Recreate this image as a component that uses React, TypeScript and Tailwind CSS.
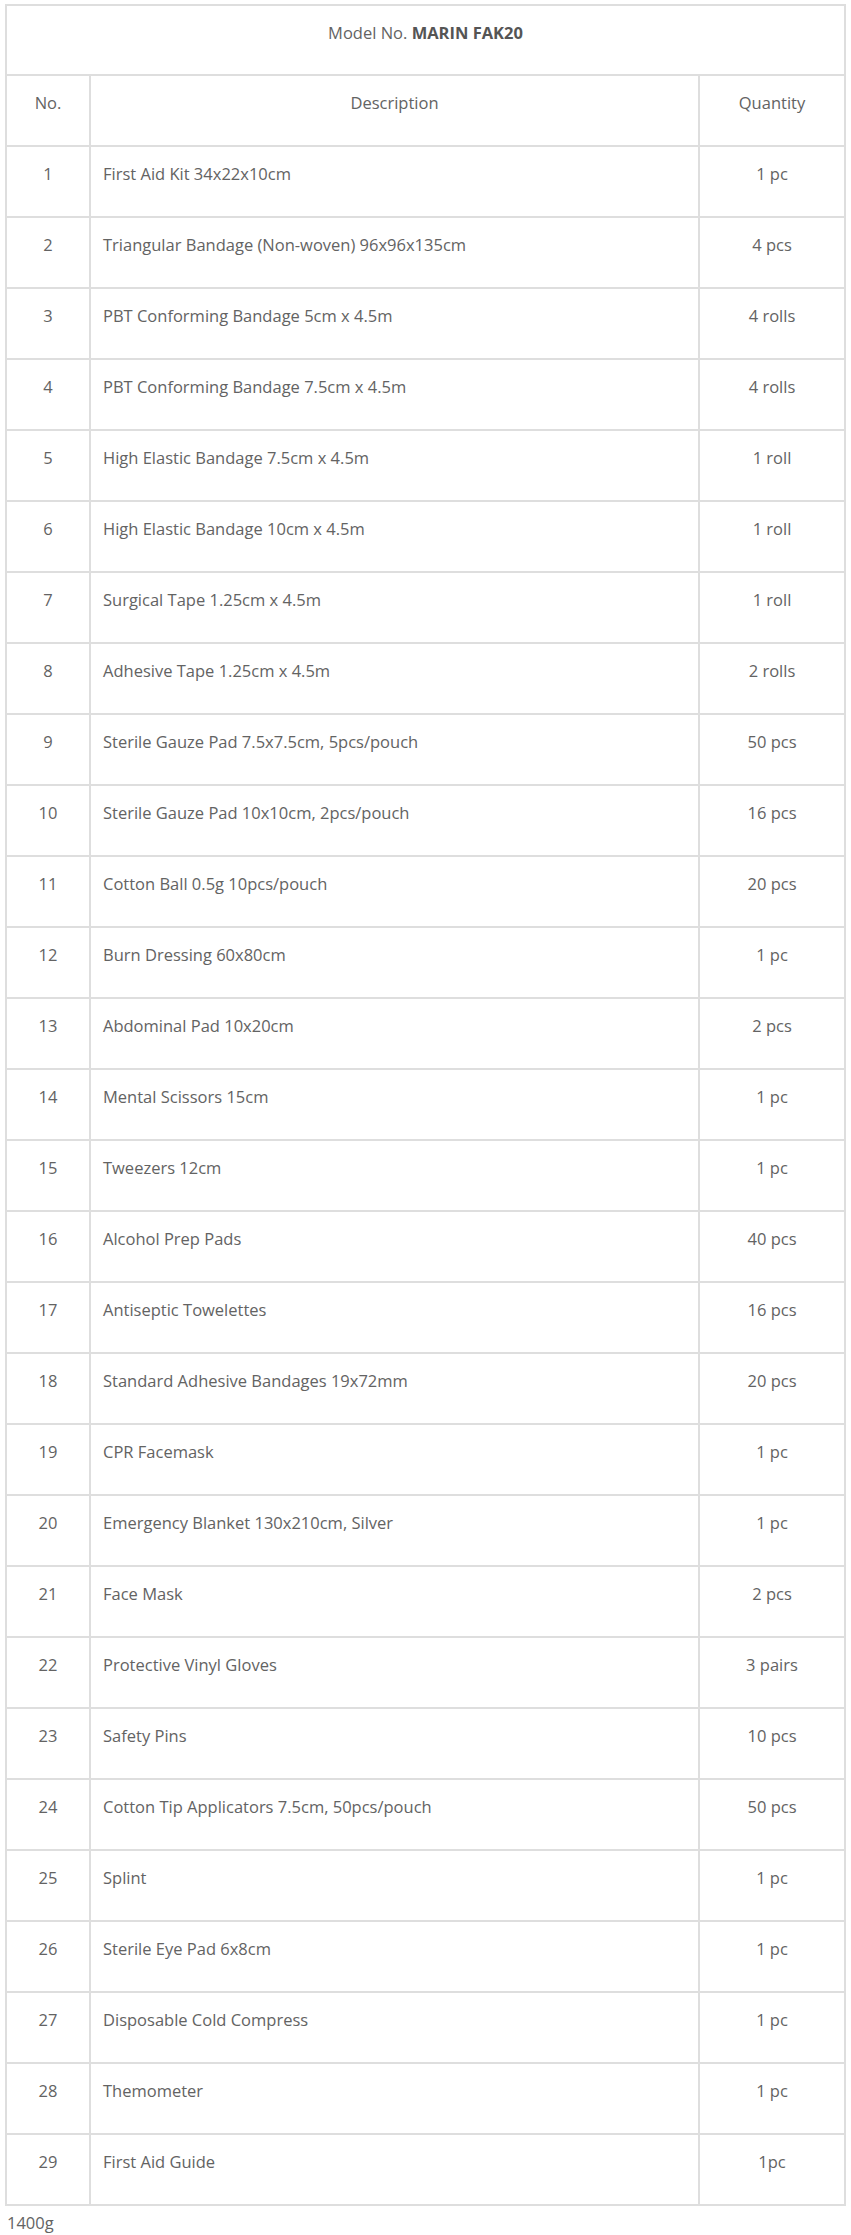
import React from "react"

const items: [string, string][] = [
    ["First Aid Kit 34x22x10cm", "1 pc"],
    ["Triangular Bandage (Non-woven) 96x96x135cm", "4 pcs"],
    ["PBT Conforming Bandage 5cm x 4.5m", "4 rolls"],
    ["PBT Conforming Bandage 7.5cm x 4.5m", "4 rolls"],
    ["High Elastic Bandage 7.5cm x 4.5m", "1 roll"],
    ["High Elastic Bandage 10cm x 4.5m", "1 roll"],
    ["Surgical Tape 1.25cm x 4.5m", "1 roll"],
    ["Adhesive Tape 1.25cm x 4.5m", "2 rolls"],
    ["Sterile Gauze Pad 7.5x7.5cm, 5pcs/pouch", "50 pcs"],
    ["Sterile Gauze Pad 10x10cm, 2pcs/pouch", "16 pcs"],
    ["Cotton Ball 0.5g 10pcs/pouch", "20 pcs"],
    ["Burn Dressing 60x80cm", "1 pc"],
    ["Abdominal Pad 10x20cm", "2 pcs"],
    ["Mental Scissors 15cm", "1 pc"],
    ["Tweezers 12cm", "1 pc"],
    ["Alcohol Prep Pads", "40 pcs"],
    ["Antiseptic Towelettes", "16 pcs"],
    ["Standard Adhesive Bandages 19x72mm", "20 pcs"],
    ["CPR Facemask", "1 pc"],
    ["Emergency Blanket 130x210cm, Silver", "1 pc"],
    ["Face Mask", "2 pcs"],
    ["Protective Vinyl Gloves", "3 pairs"],
    ["Safety Pins", "10 pcs"],
    ["Cotton Tip Applicators 7.5cm, 50pcs/pouch", "50 pcs"],
    ["Splint", "1 pc"],
    ["Sterile Eye Pad 6x8cm", "1 pc"],
    ["Disposable Cold Compress", "1 pc"],
    ["Themometer", "1 pc"],
    ["First Aid Guide", "1pc"],
]

const cell = "border-2 border-[#dedede] align-top pt-[15px] leading-6"

export default function App() {
    return (
        <div className="bg-white text-[#636363] text-[16.5px] font-['Open_Sans',sans-serif] px-[5px] pt-[4px]">
            <table className="w-full border-collapse table-fixed">
                <colgroup>
                    <col className="w-[84px]" />
                    <col />
                    <col className="w-[146px]" />
                </colgroup>
                <tbody>
                    <tr className="h-[70px]">
                        <td colSpan={3} className={`${cell} text-center`}>
                            Model No. <strong className="font-bold text-[#555]">MARIN FAK20</strong>
                        </td>
                    </tr>
                    <tr className="h-[71px]">
                        <td className={`${cell} text-center`}>No.</td>
                        <td className={`${cell} text-center`}>Description</td>
                        <td className={`${cell} text-center`}>Quantity</td>
                    </tr>
                    {items.map(([desc, qty], i) => (
                        <tr key={i} className="h-[71px]">
                            <td className={`${cell} text-center`}>{i + 1}</td>
                            <td className={`${cell} pl-3`}>{desc}</td>
                            <td className={`${cell} text-center`}>{qty}</td>
                        </tr>
                    ))}
                </tbody>
            </table>
            <p className="pt-[5px] pl-[2px] leading-6">1400g</p>
        </div>
    )
}
